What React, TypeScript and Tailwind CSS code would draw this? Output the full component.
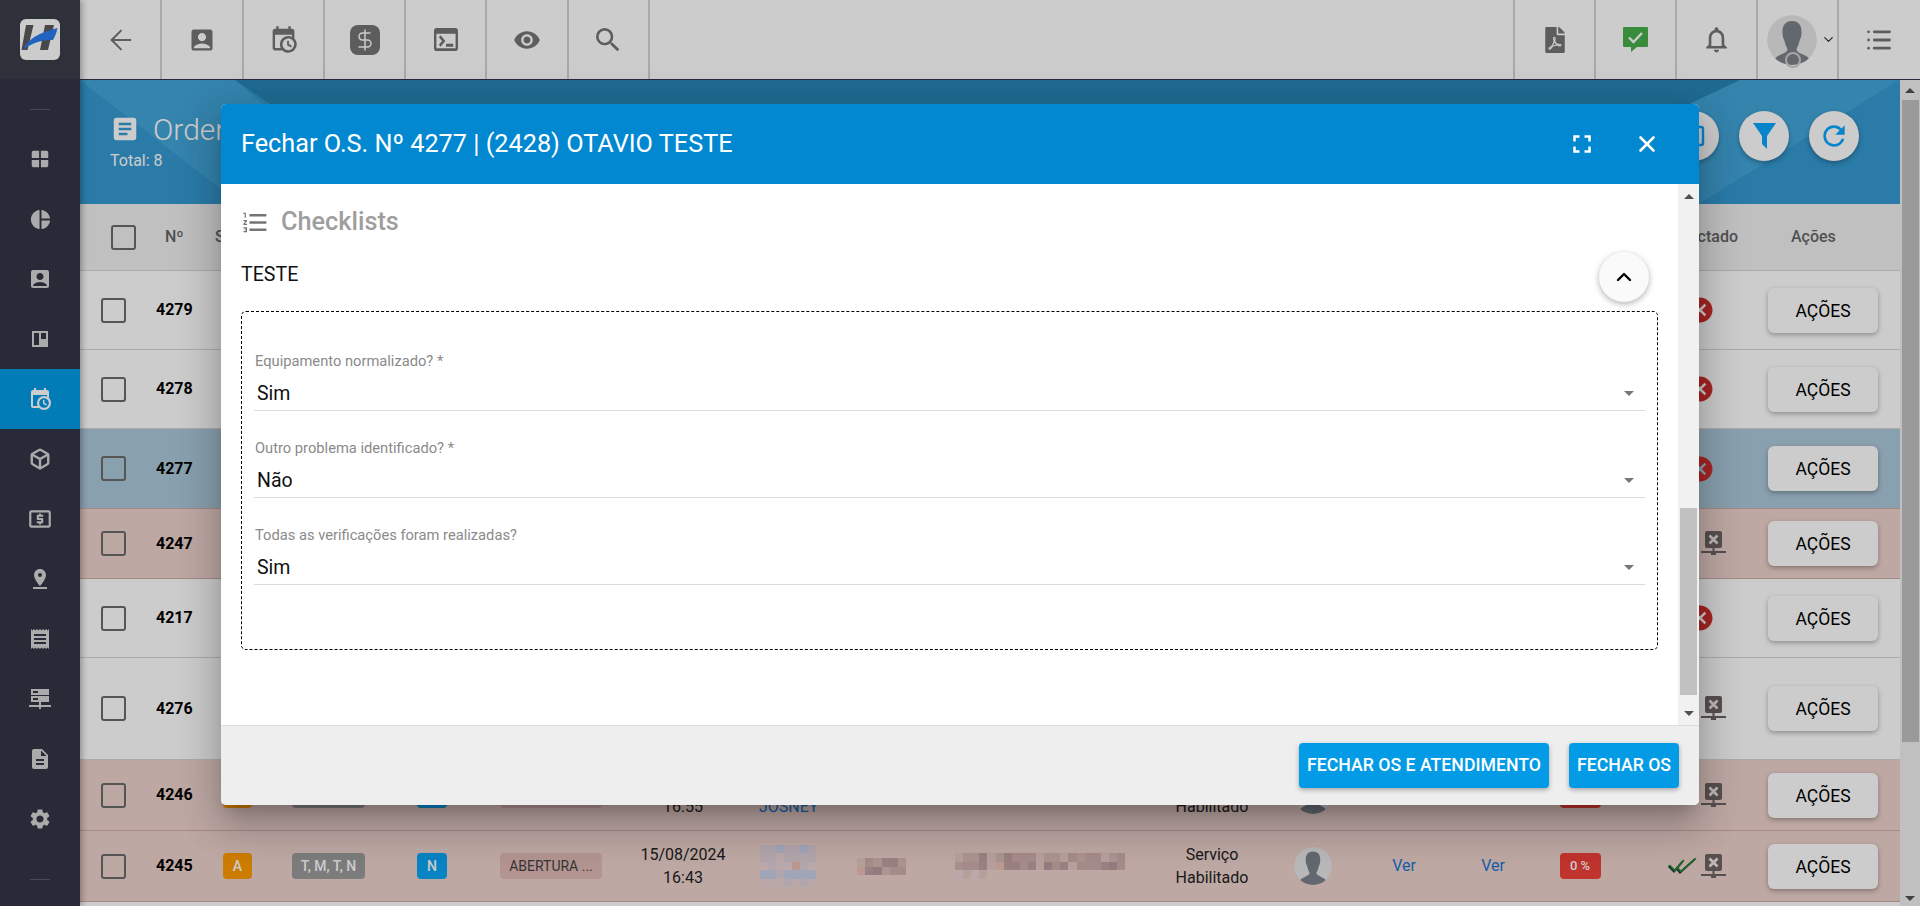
import { type ReactNode } from "react";
import {
  ArrowLeft,
  Box,
  ChevronDown,
  ChevronUp,
  DollarSign,
  List,
  Square,
  X,
} from "lucide-react";
import { FaFilePdf } from "react-icons/fa";
import {
  MdAccountBox,
  MdArticle,
  MdCancel,
  MdDescription,
  MdFormatListNumbered,
  MdFullscreen,
  MdLocalAtm,
  MdNotificationsNone,
  MdPieChart,
  MdPinDrop,
  MdReceipt,
  MdRefresh,
  MdSearch,
  MdSettings,
  MdVisibility,
  MdWindow,
} from "react-icons/md";

const CAL =
  "M15,13H16.5V15.82L18.94,17.23L18.19,18.53L15,16.69V13M19,8H5V19H9.67C9.24,18.09 9,17.07 9,16A7,7 0 0,1 16,9C17.07,9 18.09,9.24 19,9.67V8M5,21C3.89,21 3,20.1 3,19V5C3,3.89 3.89,3 5,3H6V1H8V3H16V1H18V3H19A2,2 0 0,1 21,5V11.1C22.24,12.36 23,14.09 23,16A7,7 0 0,1 16,23C14.09,23 12.36,22.24 11.1,21H5M16,11.15A4.85,4.85 0 0,0 11.15,16C11.15,18.68 13.32,20.85 16,20.85A4.85,4.85 0 0,0 20.85,16C20.85,13.32 18.68,11.15 16,11.15Z";

function CalendarClock({ size, className }: { size: number; className?: string }) {
  return (
    <svg width={size} height={size} viewBox="0 0 24 24" fill="currentColor" className={className}>
      <path d={CAL} />
    </svg>
  );
}

function Terminal() {
  return (
    <svg width="24" height="23" viewBox="2 4 20 16" preserveAspectRatio="none" fill="#757575">
      <path d="M20,4H4C2.89,4,2,4.9,2,6v12c0,1.1,.89,2,2,2h16c1.1,0,2-.9,2-2V6C22,4.9,21.11,4,20,4z M20,18H4V8h16V18z M18,17h-6v-2h6V17z M7.5,17l-1.41-1.41L8.67,13l-2.59-2.59L7.5,9l4,4L7.5,17z" />
    </svg>
  );
}

function Logo() {
  return (
    <div className="h-[41px] w-10 rounded-md bg-white">
      <svg width="40" height="41" viewBox="0 0 40 41">
        <path d="M6 6H13.5L7.5 31H1.5Z M25 6H34L28 31H20Z" fill="#5a5a5a" />
        <path d="M3 31C8 20 18 14 37.5 9C36.5 14 35 17 33 21C24 21 14 22 3 31Z" fill="#2a7cf0" />
      </svg>
    </div>
  );
}

function Kanban() {
  return (
    <svg width="20" height="20" viewBox="0 0 20 20">
      <path fill="#d6d6d6" fillRule="evenodd" d="M2 2H18V18H2Z M4 4V16H9V4Z M11 4V10H16V4Z" />
    </svg>
  );
}

function Servers() {
  return (
    <svg width="22" height="20" viewBox="0 0 22 20" fill="#d6d6d6">
      <path fillRule="evenodd" d="M2 0H20V6H2Z M4 2V4H9V2Z" />
      <path fillRule="evenodd" d="M2 7H20V13H2Z M4 9V11H9V9Z" />
      <path d="M10 13H12V16H22V18H12V20H10V18H0V16H10Z" />
    </svg>
  );
}

function Avatar({ size }: { size: number }) {
  return (
    <svg width={size} height={size} viewBox="0 0 50 50" className="block rounded-full">
      <circle cx="25" cy="25" r="25" fill="#e6e6e6" />
      <path
        fill="#7c828c"
        d="M25 6C18 6 15 11 15.500 18C15.500 22 16.500 23 17.500 26C18.500 30 19.500 32 20.500 34C20.500 37 17 38 13 40C10 41 8 43 7 46C11 49 18 50 25 50C32 50 39 49 43 46C42 43 40 41 37 40C33 38 29.500 37 29.500 34C30.500 32 31.500 30 32.500 26C33.500 23 34.500 22 34.500 18C35 11 32 6 25 6Z"
      />
    </svg>
  );
}

function ChatCheck() {
  return (
    <svg width="25" height="25" viewBox="0 0 25 25">
      <path d="M1 0H24a1 1 0 0 1 1 1V19a1 1 0 0 1-1 1H14L8 25V20H1a1 1 0 0 1-1-1V1a1 1 0 0 1 1-1Z" fill="#48af4b" />
      <path d="M6 10.5L10.5 15L19 6" fill="none" stroke="#fff" strokeWidth="2.4" />
    </svg>
  );
}

function Funnel() {
  return (
    <svg width="23" height="26" viewBox="0 0 23 26" fill="currentColor">
      <path d="M0 0H23L14 13V26L9 21V13Z" />
    </svg>
  );
}

function NetX() {
  return (
    <svg width="25" height="25" viewBox="0 0 25 25" className="shrink-0">
      <rect x="4" y="0" width="17" height="17" rx="2" fill="#6f6464" />
      <path d="M8.5 4.5L16.5 12.5M16.5 4.5L8.5 12.5" stroke="#f2e6e4" strokeWidth="2.6" />
      <path d="M11.5 17H13.5V20H25V22H15V24H10V22H0V20H11.5Z" fill="#6f6464" />
    </svg>
  );
}

function DoubleCheck() {
  return (
    <svg width="29" height="16" viewBox="0 0 29 16" fill="none" className="shrink-0">
      <path d="M0.5 8L6 13.5L15 3" stroke="#1c3f3c" strokeWidth="2" />
      <path d="M8 10L12 14.5L27 1" stroke="#1c3f3c" strokeWidth="2" />
      <path d="M1.5 7L7 12.5L16 2" stroke="#2c8a2e" strokeWidth="1.5" />
      <path d="M9 9L13 13.5L28 0" stroke="#2c8a2e" strokeWidth="1.5" />
    </svg>
  );
}

const PAL: Record<string, string> = {
  a: "#dfd0d8",
  b: "#c9cfe6",
  c: "#ead2d5",
  d: "#e3c8c4",
  e: "#d8b9b4",
  f: "#cfb0ae",
  g: "#c2a0a2",
  h: "#b89aa0",
  k: "#ecc0b4",
  m: "#d2b6ac",
};

// blurred customer data
function Mosaic({ rows, w = 8, h = 8 }: { rows: string[]; w?: number; h?: number }) {
  return (
    <svg width={rows[0].length * w} height={rows.length * h} shapeRendering="crispEdges" className="block">
      {rows.map((r, y) =>
        r.split("").map((c, x) =>
          PAL[c] ? <rect key={`${x}-${y}`} x={x * w} y={y * h} width={w} height={h} fill={PAL[c]} /> : null,
        ),
      )}
    </svg>
  );
}

function TopCell({ children, side }: { children: ReactNode; side: "l" | "r" }) {
  return (
    <div
      className={
        side === "r"
          ? "flex h-full w-[81.3px] items-center justify-center border-r-2 border-[#d4d4d4]"
          : "flex h-full w-[81px] items-center justify-center border-l-2 border-[#d4d4d4]"
      }
    >
      {children}
    </div>
  );
}

function Badge({ bg, children, w }: { bg: string; children: ReactNode; w: string }) {
  return (
    <span className={`flex h-[26px] items-center justify-center rounded text-[14px] font-medium text-white ${bg} ${w}`}>
      {children}
    </span>
  );
}

const TONES = {
  white: "bg-white border-[#d6d6d6]",
  pink: "bg-[#eed2cd] border-[#d0aaa5]",
  blue: "bg-[#acc8da] border-[#d0aaa5]",
};

type Row = {
  n: number;
  h: string;
  tone: keyof typeof TONES;
  net?: boolean;
  time?: string;
  dbl?: boolean;
};

const ROWS: Row[] = [
  { n: 4279, h: "h-[79px]", tone: "white" },
  { n: 4278, h: "h-[79px]", tone: "white" },
  { n: 4277, h: "h-[80px]", tone: "blue" },
  { n: 4247, h: "h-[70px]", tone: "pink", net: true },
  { n: 4217, h: "h-[79px]", tone: "white" },
  { n: 4276, h: "h-[102px]", tone: "white", net: true },
  { n: 4246, h: "h-[71px]", tone: "pink", net: true, time: "16:55" },
  { n: 4245, h: "h-[71px]", tone: "pink", net: true, time: "16:43", dbl: true },
];

function TableRow({ r }: { r: Row }) {
  return (
    <div
      className={`grid grid-cols-[76px_67px_69px_125px_83px_125px_116px_99px_95px_205px_144px_58px_124px_54px_120px_128px_130px] items-center border-b text-[16px] text-[#222] ${r.h} ${TONES[r.tone]}`}
    >
      <div className="pl-[21px]">
        <div className="h-[25px] w-[25px] rounded-[3px] border-2 border-[#6b6b6b]" />
      </div>
      <div className="font-bold text-black">{r.n}</div>
      {r.time ? (
        <>
          <Badge bg="bg-[#ff9c00]" w="w-[29px]">A</Badge>
          <Badge bg="bg-[#9c9c9c]" w="w-[73px]">T, M, T, N</Badge>
          <Badge bg="bg-[#0aa4f4]" w="w-[30px]">N</Badge>
          <span className="flex h-[26px] w-[102px] items-center justify-center rounded bg-[#e0bab6] text-[14px] text-[#444]">
            ABERTURA ...
          </span>
          <div className="text-center leading-[23px]">
            15/08/2024
            <br />
            {r.time}
          </div>
          {r.dbl ? (
            <div className="pl-[19px]">
              <Mosaic h={8.4} rows={["aabaaba", "aacaaaa", "cacckac", "bbabbbb", "cccacac"]} />
            </div>
          ) : (
            <div className="pl-[18px] leading-[23px] whitespace-nowrap text-[#1976d2]">
              &nbsp;
              <br />
              JOSNEY
            </div>
          )}
          {r.dbl ? (
            <div className="pl-[17px]">
              <Mosaic w={8.2} h={8.5} rows={["dfegge", "kgheff"]} />
            </div>
          ) : (
            <div />
          )}
          {r.dbl ? (
            <div className="pl-[20px]">
              <Mosaic
                w={8.1}
                h={8.5}
                rows={["deegdegfffdeedfeffdef", "mffgdkggfgdhfgdfffghf", "cdcd                 "]}
              />
            </div>
          ) : (
            <div />
          )}
          <div className="text-center leading-[23px]">
            Serviço
            <br />
            Habilitado
          </div>
          <div className="flex justify-center">
            <Avatar size={38} />
          </div>
          <div className="text-center text-[#1976d2]">Ver</div>
          <div className="text-center text-[#1976d2]">Ver</div>
          <div className="flex justify-center">
            <span className="flex h-[26px] w-[41px] items-center justify-center rounded bg-[#f0403a] text-[13px] font-medium text-white">
              0 %
            </span>
          </div>
        </>
      ) : (
        <div className="col-span-13" />
      )}
      <div className={r.net ? "flex items-center justify-end gap-1 pr-[42px]" : "flex items-center justify-end pr-[53px]"}>
        {r.dbl && <DoubleCheck />}
        {r.net ? <NetX /> : <MdCancel size={30} className="text-[#d32f2f]" />}
      </div>
      <button className="flex h-[45px] w-[110px] items-center justify-center rounded-md bg-white pt-[2px] text-[17.5px] text-black shadow-[0_2px_5px_rgba(0,0,0,0.3)]">
        AÇÕES
      </button>
    </div>
  );
}

function Field({ label, value }: { label: string; value: string }) {
  return (
    <div className="mb-[27px]">
      <div className="h-5 pl-px text-[14.7px] leading-5 text-[#8a8a8a]">{label}</div>
      <div className="flex h-[40px] items-center justify-between border-b border-[#dcdcdc] pt-[6px] pl-[3px] pr-[11px] text-[19.5px] text-[#111]">
        <span>{value}</span>
        <span className="h-0 w-0 border-x-[5px] border-t-[5px] border-x-transparent border-t-[#777]" />
      </div>
    </div>
  );
}

function Arrow({ up, color = "border-[#505050]" }: { up?: boolean; color?: string }) {
  return up ? (
    <span className={`h-0 w-0 border-x-[5px] border-b-[5px] border-x-transparent ${color}`} />
  ) : (
    <span className={`h-0 w-0 border-x-[5px] border-t-[5px] border-x-transparent ${color}`} />
  );
}

export default function App() {
  return (
    <div className="relative flex h-[906px] w-[1920px] overflow-hidden bg-white font-['Roboto',sans-serif]">
      {/* sidebar */}
      <aside className="z-10 flex w-20 shrink-0 flex-col bg-[#333645] shadow-[2px_0_6px_rgba(0,0,0,0.3)]">
        <div className="flex h-20 items-center justify-center border-b border-[#333645] bg-[#3a3d49]">
          <Logo />
        </div>
        <div className="mx-auto mt-[29px] h-px w-5 bg-[#5a5d6a]" />
        <nav className="mt-[19px] flex flex-col text-[#d6d6d6]">
          {[
            <MdWindow size={22} />,
            <MdPieChart size={23} />,
            <MdAccountBox size={24} />,
            <Kanban />,
            <CalendarClock size={24} className="text-white" />,
            <Box size={22} strokeWidth={2.6} />,
            <MdLocalAtm size={26} />,
            <MdPinDrop size={24} />,
            <MdReceipt size={24} />,
            <Servers />,
            <MdDescription size={24} />,
            <MdSettings size={24} />,
          ].map((icon, i) => (
            <div key={i} className={i === 4 ? "flex h-[60px] items-center justify-center bg-[#039be5]" : "flex h-[60px] items-center justify-center"}>
              {icon}
            </div>
          ))}
        </nav>
        <div className="mx-auto mt-[30px] h-px w-5 bg-[#5a5d6a]" />
      </aside>

      <div className="flex min-w-0 flex-1 flex-col">
        {/* top bar */}
        <header className="flex h-20 shrink-0 items-stretch justify-between border-b border-[#333645] bg-white text-[#757575]">
          <div className="ml-px flex h-full">
            <TopCell side="r">
              <ArrowLeft size={32} strokeWidth={1.5} />
            </TopCell>
            <TopCell side="r">
              <MdAccountBox size={28} />
            </TopCell>
            <TopCell side="r">
              <CalendarClock size={29} />
            </TopCell>
            <TopCell side="r">
              <div className="flex h-[30px] w-[30px] items-center justify-center rounded-lg bg-[#757575]">
                <DollarSign size={24} strokeWidth={1.5} className="text-white" />
              </div>
            </TopCell>
            <TopCell side="r">
              <Terminal />
            </TopCell>
            <TopCell side="r">
              <MdVisibility size={28} />
            </TopCell>
            <TopCell side="r">
              <MdSearch size={32} />
            </TopCell>
          </div>
          <div className="mr-[2px] flex h-full">
            <TopCell side="l">
              <FaFilePdf size={26} />
            </TopCell>
            <TopCell side="l">
              <ChatCheck />
            </TopCell>
            <TopCell side="l">
              <MdNotificationsNone size={31} />
            </TopCell>
            <TopCell side="l">
              <div className="relative flex items-center gap-1 pl-2">
                <Avatar size={50} />
                <span className="absolute top-[37px] left-[26px] h-4 w-4 rounded-full border-2 border-[#cfcfcf]" />
                <ChevronDown size={15} className="text-[#333]" />
              </div>
            </TopCell>
            <TopCell side="l">
              <List size={28} strokeWidth={2.4} />
            </TopCell>
          </div>
        </header>

        <div className="flex min-h-0 flex-1">
          <main className="w-[1820px] shrink-0">
            {/* page head */}
            <section className="relative flex h-[124px] justify-between overflow-hidden bg-[#359ad2] pt-[31px] pr-[41px] pl-[30px] text-white">
              <svg className="absolute inset-0" width="1820" height="124">
                <polygon points="155,0 1660,0 1620,24 190,24" fill="#2885b7" />
                <polygon points="0,0 155,0 300,124 160,124" fill="#42a6da" />
                <polygon points="1660,0 1819,0 1620,123 1400,123" fill="#42a6da" />
              </svg>
              <div className="relative">
                <div className="flex h-9 items-center gap-[13px]">
                  <MdArticle size={30} />
                  <span className="text-[30px] font-light whitespace-nowrap">Orden</span>
                </div>
                <div className="mt-[2px] text-[16px] leading-6">Total: 8</div>
              </div>
              <div className="relative flex gap-5">
                {[
                  <Square size={24} strokeWidth={2.4} />,
                  <Funnel />,
                  <MdRefresh size={32} />,
                ].map((icon, i) => (
                  <span key={i} className="flex h-[50px] w-[50px] items-center justify-center rounded-full bg-white text-[#0aa5ff] shadow-[0_2px_5px_rgba(0,0,0,0.3)]">
                    {icon}
                  </span>
                ))}
              </div>
            </section>

            {/* table */}
            <div className="grid h-[67px] grid-cols-[85px_50px_1415px_108px_162px] items-center border-b border-[#d6d6d6] bg-[#f0f0f0] text-[16px] font-medium text-[#666]">
              <div className="pl-[31px]">
                <div className="h-[25px] w-[25px] rounded-[3px] border-2 border-[#6b6b6b]" />
              </div>
              <div>Nº</div>
              <div>Status</div>
              <div className="text-right">Contactado</div>
              <div className="pl-[53px]">Ações</div>
            </div>
            {ROWS.map((r) => (
              <TableRow key={r.n} r={r} />
            ))}
          </main>

          {/* page scrollbar */}
          <div className="flex w-5 flex-col items-center bg-[#f1f1f1]">
            <div className="flex h-5 items-center">
              <Arrow up />
            </div>
            <div className="h-[642px] w-[17px] bg-[#c1c1c1]" />
            <div className="flex-1" />
            <div className="flex h-4 items-center">
              <Arrow />
            </div>
          </div>
        </div>
      </div>

      {/* backdrop */}
      <div className="absolute inset-0 z-20 bg-black/20" />

      {/* dialog */}
      <div className="absolute top-[104px] left-[221px] z-30 flex h-[701px] w-[1478px] flex-col overflow-hidden rounded-[5px] bg-white shadow-[0_11px_15px_-7px_rgba(0,0,0,0.2),0_24px_38px_3px_rgba(0,0,0,0.14),0_9px_46px_8px_rgba(0,0,0,0.12)]">
        <div className="flex h-20 shrink-0 items-center justify-between bg-[#0288d1] pr-[39px] pl-5 text-white">
          <h2 className="text-[25.25px]">Fechar O.S. Nº 4277 | (2428) OTAVIO TESTE</h2>
          <div className="flex items-center gap-[37px]">
            <MdFullscreen size={30} />
            <X size={26} strokeWidth={2.4} />
          </div>
        </div>

        <div className="flex h-[541px] shrink-0">
          <div className="min-w-0 flex-1 pt-[22px] pr-5 pl-5">
            <div className="flex h-8 items-center gap-[11px]">
              <MdFormatListNumbered size={29} className="text-[#757575]" />
              <span className="text-[25.3px] font-medium text-[#9e9e9e]">Checklists</span>
            </div>
            <div className="mt-[14px] flex h-[50px] items-center justify-between pr-[9px]">
              <span className="mb-[5px] text-[19.6px] text-[#111]">TESTE</span>
              <button className="flex h-[50px] w-[50px] items-center justify-center rounded-full bg-[#fafafa] shadow-[0_2px_6px_rgba(0,0,0,0.3)]">
                <ChevronUp size={24} strokeWidth={2.4} className="text-black" />
              </button>
            </div>
            <div className="mt-[9px] h-[339px] rounded-[5px] border border-dashed border-black px-[12px] pt-[39px]">
              <Field label="Equipamento normalizado? *" value="Sim" />
              <Field label="Outro problema identificado? *" value="Não" />
              <Field label="Todas as verificações foram realizadas?" value="Sim" />
            </div>
          </div>
          <div className="flex w-[21px] flex-col items-center bg-[#f1f1f1]">
            <div className="flex h-6 items-center">
              <Arrow up />
            </div>
            <div className="mt-[300px] h-[187px] w-[17px] bg-[#c1c1c1]" />
            <div className="flex-1" />
            <div className="flex h-6 items-center">
              <Arrow />
            </div>
          </div>
        </div>

        <div className="flex flex-1 items-center justify-end gap-5 border-t border-[#dcdcdc] bg-[#eeeeee] pr-5">
          <button className="h-[45px] w-[250px] rounded bg-[#039be5] text-[17.7px] font-medium text-white shadow-[0_2px_5px_rgba(0,0,0,0.3)]">
            FECHAR OS E ATENDIMENTO
          </button>
          <button className="h-[45px] w-[110px] rounded bg-[#039be5] text-[17.7px] font-medium text-white shadow-[0_2px_5px_rgba(0,0,0,0.3)]">
            FECHAR OS
          </button>
        </div>
      </div>
    </div>
  );
}
